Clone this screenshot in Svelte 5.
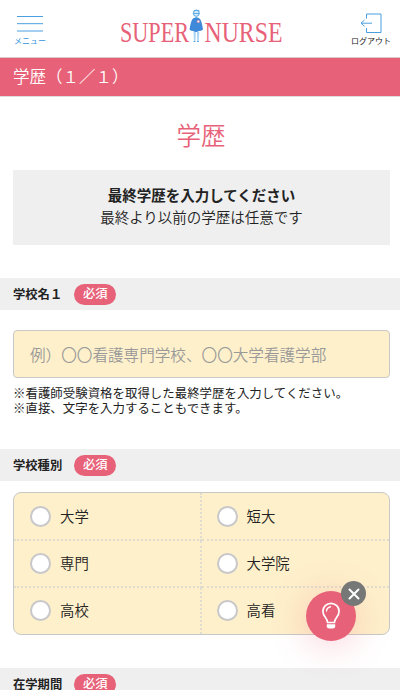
<script lang="ts">
    type Choice = { value: string; label: string }

    const schoolTypes: Choice[] = [
        { value: 'university', label: '大学' },
        { value: 'junior', label: '短大' },
        { value: 'vocational', label: '専門' },
        { value: 'graduate', label: '大学院' },
        { value: 'high', label: '高校' },
        { value: 'nursing', label: '高看' },
    ]

    let schoolName = $state('')
    let schoolType = $state('')
    let hintOpen = $state(true)
</script>

{#snippet heading(title: string)}
    <h2 class="section-heading">
        <span class="section-title">{title}</span>
        <span class="required">必須</span>
    </h2>
{/snippet}

<div class="page">
    <header class="header">
        <button class="header-button menu">
            <svg width="26" height="18" viewBox="0 0 26 18" fill="none" stroke="#4a9fe0">
                <path d="M0 1.500h26" />
                <path d="M0 8.700h26" />
                <path d="M0 16h26" />
            </svg>
            <span>メニュー</span>
        </button>
        <svg class="logo" width="164" height="44" viewBox="0 0 164 44" aria-label="SUPER NURSE">
            <g class="logo-text">
                <text x="0" y="32.500" textLength="69" lengthAdjust="spacingAndGlyphs">SUPER</text>
                <text x="84.500" y="32.500" textLength="78" lengthAdjust="spacingAndGlyphs">NURSE</text>
            </g>
            <path d="M73.500 23h2.200v6l-.4 3.300h-1.300zM77 23h2.300l-.6 9.300h-1.500z" fill="#a9d3f3" />
            <path d="M73.500 32.500h2M77 32.500h2" stroke="#5ca8e2" />
            <path d="M73 9.500q3.500-2 6.500 0 2.200 1.500 3.500 11-2 1.500-4 1.500-3 2-6 0-2 0-3.500-1.500Q71 11 73 9.500z" fill="#3f89da" />
            <circle cx="76.300" cy="4.300" r="3" fill="#d7edfa" stroke="#5ca8e2" />
            <path d="M73.500 2q3-2 6 0M73.500 4.500h6M75.300 8.300h2" fill="none" stroke="#5ca8e2" />
            <circle cx="78.300" cy="12.500" r="1.300" fill="#fff" stroke="#e76178" stroke-width=".5" />
        </svg>
        <button class="header-button logout">
            <svg width="22" height="21" viewBox="0 0 22 21" fill="none" stroke="#4a9fe0">
                <path d="M6.500 5.500v-4.500h14.500v18.500h-14.500v-4.500M12 10.200h-11M4.500 7l-3.500 3.200 3.500 3.200" />
            </svg>
            <span>ログアウト</span>
        </button>
    </header>

    <div class="step-bar">学歴（１／１）</div>

    <main>
        <h1>学歴</h1>

        <div class="lead">
            <strong>最終学歴を入力してください</strong>
            <p>最終より以前の学歴は任意です</p>
        </div>

        {@render heading('学校名１')}
        <div class="field school-name">
            <input type="text" placeholder="例）〇〇看護専門学校、〇〇大学看護学部" bind:value={schoolName} />
            <p>※看護師受験資格を取得した最終学歴を入力してください。</p>
            <p>※直接、文字を入力することもできます。</p>
        </div>

        {@render heading('学校種別')}
        <div class="field school-type">
            <div class="choices">
                {#each schoolTypes as choice (choice.value)}
                    <label class="choice">
                        <input type="radio" name="school-type" value={choice.value} bind:group={schoolType} />
                        <span>{choice.label}</span>
                    </label>
                {/each}
            </div>
        </div>

        {@render heading('在学期間')}
    </main>

    {#if hintOpen}
        <div class="hint">
            <button class="hint-button" aria-label="ヒント">
                <svg width="20" height="28" viewBox="0 0 20 28" fill="none" stroke="#fff" stroke-width="1.700">
                    <path d="M6.600 20.500c0-4.500-4.700-5.800-4.700-11.300a8.100 7.800 0 0 1 16.200 0c0 5.500-4.700 6.800-4.700 11.300z" />
                    <path d="M5.500 9q.3-3.500 4-4.300" stroke-width="1.400" stroke-linecap="round" />
                    <path d="M5.800 22.200h8.400v2q0 2.300-2.300 2.300h-3.800q-2.300 0-2.300-2.300z" fill="#fff" stroke="none" />
                </svg>
            </button>
            <button class="hint-close" aria-label="閉じる" onclick={() => (hintOpen = false)}>
                <svg width="12" height="12" viewBox="0 0 12 12" stroke="#fff" stroke-width="2" stroke-linecap="round">
                    <path d="M1.500 1.500l9 9M10.500 1.500l-9 9" />
                </svg>
            </button>
        </div>
    {/if}
</div>

<style>
    :global(body) {
        margin: 0;
        background: #fff;
    }

    .page {
        position: relative;
        box-sizing: border-box;
        height: 690px;
        overflow: hidden;
        color: #222;
        font-family: 'Noto Sans CJK JP', sans-serif;
        font-weight: 350;
    }

    button {
        padding: 0;
        border: 0;
        background: none;
        font: inherit;
        cursor: pointer;
    }

    p,
    h1,
    h2 {
        margin: 0;
    }

    svg {
        display: block;
    }

    .header {
        box-sizing: border-box;
        display: flex;
        justify-content: space-between;
        align-items: flex-start;
        height: 57px;
        padding: 9px 9px 0 14px;
    }

    .header-button {
        display: flex;
        flex-direction: column;
        align-items: center;
        font-size: 8px;
        font-weight: 400;
        line-height: 12px;
        white-space: nowrap;
    }

    .menu {
        width: 32px;
        padding-top: 6px;
        color: #3695dc;
    }

    .menu span {
        margin-top: 2px;
    }

    .logout {
        width: 40px;
        padding-top: 4px;
        color: #222;
    }

    .logout span {
        margin-top: 1px;
    }

    .logo {
        margin-left: 7px;
    }

    .logo-text {
        fill: #e76178;
        font-family: 'Liberation Serif', serif;
        font-size: 30px;
        font-weight: 400;
    }

    .step-bar {
        box-sizing: border-box;
        height: 40px;
        padding-left: 13px;
        border-top: 1px solid #dcc8cb;
        border-bottom: 1px solid #ddd;
        background: #e76178;
        color: #fff;
        font-size: 16.500px;
        line-height: 36px;
    }

    h1 {
        padding: 18px 0 16px;
        color: #e76178;
        font-size: 24.500px;
        font-weight: 350;
        line-height: 39px;
        text-align: center;
        text-indent: 2px;
    }

    .lead {
        box-sizing: border-box;
        height: 75px;
        margin: 0 10px 33px 13px;
        padding-top: 14px;
        background: #efefef;
        font-size: 14.500px;
        line-height: 22px;
        text-align: center;
    }

    .lead strong {
        display: block;
        font-weight: 700;
    }

    .section-heading {
        display: flex;
        align-items: center;
        gap: 12px;
        height: 32px;
        padding-left: 13px;
        background: #efefef;
        font-size: 12.300px;
        font-weight: 700;
    }

    .section-title {
        padding-bottom: 1px;
    }

    .required {
        width: 42px;
        height: 21px;
        border-radius: 11px;
        background: #e76178;
        color: #fff;
        font-weight: 500;
        line-height: 19px;
        text-align: center;
    }

    .field {
        box-sizing: border-box;
        padding: 0 10px 0 13px;
    }

    .school-name {
        height: 139px;
        padding-top: 20px;
    }

    .school-name input {
        display: block;
        box-sizing: border-box;
        width: 100%;
        height: 48px;
        margin-bottom: 8px;
        padding: 0 16px;
        border: 1px solid #c8c8c8;
        border-radius: 4px;
        background: #fef0cb;
        color: #222;
        font: inherit;
        font-size: 15.600px;
    }

    .school-name input::placeholder {
        color: #999;
        opacity: 1;
    }

    .school-name p {
        font-size: 12.450px;
        font-weight: 400;
        line-height: 15px;
    }

    .school-type {
        height: 187px;
        padding-top: 11px;
    }

    .choices {
        display: grid;
        grid-template-columns: 1fr 1fr;
        grid-template-rows: 48px 47px 46px;
        overflow: hidden;
        border: 1px solid #c8c8c8;
        border-radius: 8px;
        background: #fef0cb;
    }

    .choice {
        display: flex;
        align-items: center;
        gap: 9px;
        padding-left: 16px;
        border-bottom: 2px dotted #e0dccf;
        font-size: 14.400px;
        line-height: 22px;
    }

    .choice:nth-child(odd) {
        border-right: 2px dotted #e0dccf;
    }

    .choice:nth-child(even) {
        padding-left: 15px;
    }

    .choice:nth-last-child(-n + 2) {
        padding-bottom: 2px;
        border-bottom: 0;
    }

    .choice span {
        padding-bottom: 1px;
    }

    .choice input {
        appearance: none;
        box-sizing: border-box;
        width: 21px;
        height: 21px;
        margin: 0;
        border: 2px solid #c8c8cb;
        border-radius: 50%;
        background: #fff;
    }

    .choice input:checked {
        background: radial-gradient(circle, #e76178 45%, #fff 50%);
    }

    /* Floats over the form */
    .hint {
        position: absolute;
        top: 591px;
        left: 306px;
    }

    .hint-button {
        display: grid;
        place-items: center;
        width: 50px;
        height: 50px;
        border-radius: 50%;
        background: #e76178;
        box-shadow: 0 4px 36px rgb(231 97 120 / 30%);
    }

    .hint-close {
        position: absolute;
        top: -10px;
        right: -10px;
        display: grid;
        place-items: center;
        width: 25px;
        height: 25px;
        border-radius: 50%;
        background: #757876;
    }
</style>
